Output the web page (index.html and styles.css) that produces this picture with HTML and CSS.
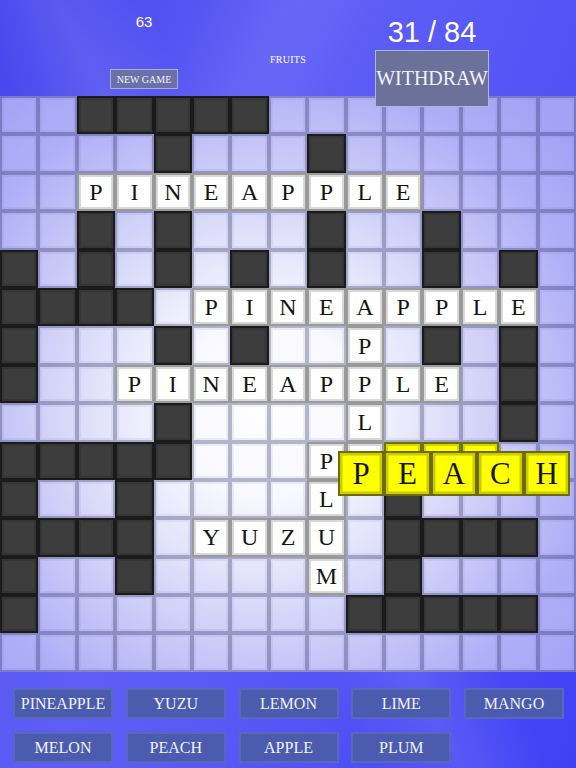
FILE: index.html
```html
<!DOCTYPE html>
<html>
<head>
<meta charset="utf-8">
<title>Fruits</title>
<link rel="stylesheet" href="styles.css">
</head>
<body>
<header class="top">
  <div class="side">
    <div class="score">63</div>
    <div class="btn newgame">NEW GAME</div>
  </div>
  <div class="mid"><span class="category">FRUITS</span></div>
  <div class="side">
    <div class="progress">31 / 84</div>
    <div class="btn withdraw">WITHDRAW</div>
  </div>
</header>

<main class="board">
  <!-- row 0 -->
  <span class="sq"></span><span class="sq"></span><span class="sq blk"></span><span class="sq blk"></span><span class="sq blk"></span><span class="sq blk"></span><span class="sq blk"></span><span class="sq"></span><span class="sq"></span><span class="sq"></span><span class="sq"></span><span class="sq"></span><span class="sq"></span><span class="sq"></span><span class="sq"></span>
  <!-- row 1 -->
  <span class="sq"></span><span class="sq"></span><span class="sq"></span><span class="sq"></span><span class="sq blk"></span><span class="sq"></span><span class="sq"></span><span class="sq"></span><span class="sq blk"></span><span class="sq"></span><span class="sq"></span><span class="sq"></span><span class="sq"></span><span class="sq"></span><span class="sq"></span>
  <!-- row 2 -->
  <span class="sq"></span><span class="sq"></span><span class="sq ltr">P</span><span class="sq ltr">I</span><span class="sq ltr">N</span><span class="sq ltr">E</span><span class="sq ltr">A</span><span class="sq ltr">P</span><span class="sq ltr">P</span><span class="sq ltr">L</span><span class="sq ltr">E</span><span class="sq"></span><span class="sq"></span><span class="sq"></span><span class="sq"></span>
  <!-- row 3 -->
  <span class="sq"></span><span class="sq"></span><span class="sq blk"></span><span class="sq"></span><span class="sq blk"></span><span class="sq"></span><span class="sq"></span><span class="sq"></span><span class="sq blk"></span><span class="sq"></span><span class="sq"></span><span class="sq blk"></span><span class="sq"></span><span class="sq"></span><span class="sq"></span>
  <!-- row 4 -->
  <span class="sq blk"></span><span class="sq"></span><span class="sq blk"></span><span class="sq"></span><span class="sq blk"></span><span class="sq"></span><span class="sq blk"></span><span class="sq"></span><span class="sq blk"></span><span class="sq"></span><span class="sq"></span><span class="sq blk"></span><span class="sq"></span><span class="sq blk"></span><span class="sq"></span>
  <!-- row 5 -->
  <span class="sq blk"></span><span class="sq blk"></span><span class="sq blk"></span><span class="sq blk"></span><span class="sq"></span><span class="sq ltr">P</span><span class="sq ltr">I</span><span class="sq ltr">N</span><span class="sq ltr">E</span><span class="sq ltr">A</span><span class="sq ltr">P</span><span class="sq ltr">P</span><span class="sq ltr">L</span><span class="sq ltr">E</span><span class="sq"></span>
  <!-- row 6 -->
  <span class="sq blk"></span><span class="sq"></span><span class="sq"></span><span class="sq"></span><span class="sq blk"></span><span class="sq"></span><span class="sq blk"></span><span class="sq"></span><span class="sq"></span><span class="sq ltr">P</span><span class="sq"></span><span class="sq blk"></span><span class="sq"></span><span class="sq blk"></span><span class="sq"></span>
  <!-- row 7 -->
  <span class="sq blk"></span><span class="sq"></span><span class="sq"></span><span class="sq ltr">P</span><span class="sq ltr">I</span><span class="sq ltr">N</span><span class="sq ltr">E</span><span class="sq ltr">A</span><span class="sq ltr">P</span><span class="sq ltr">P</span><span class="sq ltr">L</span><span class="sq ltr">E</span><span class="sq"></span><span class="sq blk"></span><span class="sq"></span>
  <!-- row 8 -->
  <span class="sq"></span><span class="sq"></span><span class="sq"></span><span class="sq"></span><span class="sq blk"></span><span class="sq"></span><span class="sq"></span><span class="sq"></span><span class="sq"></span><span class="sq ltr">L</span><span class="sq"></span><span class="sq"></span><span class="sq"></span><span class="sq blk"></span><span class="sq"></span>
  <!-- row 9 -->
  <span class="sq blk"></span><span class="sq blk"></span><span class="sq blk"></span><span class="sq blk"></span><span class="sq blk"></span><span class="sq"></span><span class="sq"></span><span class="sq"></span><span class="sq ltr">P</span><span class="sq ltr"></span><span class="sq hl"></span><span class="sq hl"></span><span class="sq hl"></span><span class="sq"></span><span class="sq"></span>
  <!-- row 10 -->
  <span class="sq blk"></span><span class="sq"></span><span class="sq"></span><span class="sq blk"></span><span class="sq"></span><span class="sq"></span><span class="sq"></span><span class="sq"></span><span class="sq ltr">L</span><span class="sq"></span><span class="sq blk"></span><span class="sq"></span><span class="sq"></span><span class="sq"></span><span class="sq"></span>
  <!-- row 11 -->
  <span class="sq blk"></span><span class="sq blk"></span><span class="sq blk"></span><span class="sq blk"></span><span class="sq"></span><span class="sq ltr">Y</span><span class="sq ltr">U</span><span class="sq ltr">Z</span><span class="sq ltr">U</span><span class="sq"></span><span class="sq blk"></span><span class="sq blk"></span><span class="sq blk"></span><span class="sq blk"></span><span class="sq"></span>
  <!-- row 12 -->
  <span class="sq blk"></span><span class="sq"></span><span class="sq"></span><span class="sq blk"></span><span class="sq"></span><span class="sq"></span><span class="sq"></span><span class="sq"></span><span class="sq ltr">M</span><span class="sq"></span><span class="sq blk"></span><span class="sq"></span><span class="sq"></span><span class="sq"></span><span class="sq"></span>
  <!-- row 13 -->
  <span class="sq blk"></span><span class="sq"></span><span class="sq"></span><span class="sq"></span><span class="sq"></span><span class="sq"></span><span class="sq"></span><span class="sq"></span><span class="sq"></span><span class="sq blk"></span><span class="sq blk"></span><span class="sq blk"></span><span class="sq blk"></span><span class="sq blk"></span><span class="sq"></span>
  <!-- row 14 -->
  <span class="sq"></span><span class="sq"></span><span class="sq"></span><span class="sq"></span><span class="sq"></span><span class="sq"></span><span class="sq"></span><span class="sq"></span><span class="sq"></span><span class="sq"></span><span class="sq"></span><span class="sq"></span><span class="sq"></span><span class="sq"></span><span class="sq"></span>

  <div class="drag">
    <span class="tile">P</span><span class="tile">E</span><span class="tile">A</span><span class="tile">C</span><span class="tile">H</span>
  </div>
</main>

<footer class="words">
  <div class="word">PINEAPPLE</div>
  <div class="word">YUZU</div>
  <div class="word">LEMON</div>
  <div class="word">LIME</div>
  <div class="word">MANGO</div>
  <div class="word">MELON</div>
  <div class="word">PEACH</div>
  <div class="word">APPLE</div>
  <div class="word">PLUM</div>
</footer>
</body>
</html>
```
FILE: styles.css
```css
html, body {
  margin: 0;
  padding: 0;
}

body {
  width: 576px;
  height: 768px;
  overflow: hidden;
  font-family: "Liberation Serif", "DejaVu Serif", serif;
  color: #ffffff;
  background:
    linear-gradient(62deg, rgba(255,255,255,0) 38%, rgba(255,255,255,0.09) 47%, rgba(255,255,255,0) 56%),
    linear-gradient(118deg, rgba(255,255,255,0) 20%, rgba(255,255,255,0.07) 30%, rgba(255,255,255,0) 40%),
    linear-gradient(110deg, #4646ee 0%, #5e5ef6 38%, #5858f6 58%, #4040f6 100%);
}

/* ---------- header ---------- */
.top {
  display: grid;
  grid-template-columns: 1fr 0 1fr;
  height: 96px;
}

.side {
  display: flex;
  flex-direction: column;
  align-items: center;
}

.score {
  font: 15px/16px "Liberation Sans", Arial, sans-serif;
  margin-top: 14px;
}

.mid {
  display: flex;
  justify-content: center;
  padding-top: 54px;
}

.category {
  font-size: 10px;
  line-height: 12px;
  white-space: nowrap;
  letter-spacing: 0.3px;
}

.btn {
  box-sizing: border-box;
  display: flex;
  align-items: center;
  justify-content: center;
  white-space: nowrap;
  color: #f2f2ff;
}

.newgame {
  margin-top: 39px;
  width: 68px;
  height: 20px;
  font-size: 10px;
  background: #6a71a6;
  border: 1px solid #a8aedc;
}

.progress {
  font: 29px/30px "Liberation Sans", Arial, sans-serif;
  margin-top: 17px;
}

.withdraw {
  position: relative;
  z-index: 2;
  margin-top: 3px;
  width: 114px;
  height: 57px;
  font-size: 20px;
  background: #6b7199;
  border: 1.5px solid #b2b6d6;
}

/* ---------- board ---------- */
.board {
  position: relative;
  display: grid;
  grid-template-columns: repeat(15, 1fr);
  grid-template-rows: repeat(15, 38.4px);
  width: 576px;
  height: 576px;
  background:
    radial-gradient(circle at 46% 54%, #ffffff 0px, #f8f8fe 90px, #e2e2fb 170px, #c9c9f8 250px, #b0b0f8 330px, #a2a2f6 410px);
}

.sq {
  box-sizing: border-box;
  border: 2px solid rgba(30, 30, 90, 0.32);
  box-shadow: inset 0 0 0 2px rgba(110, 110, 160, 0.10);
  display: flex;
  align-items: center;
  justify-content: center;
}

.blk {
  background: #3d3d3d;
  border-color: #1b1b1b;
  box-shadow: inset 0 0 0 2px #353535;
}

.ltr {
  background: #ffffff;
  border-color: #9a9a9a;
  box-shadow: inset 0 0 0 2px #d8d8d8;
  color: #141414;
  font-size: 24px;
  line-height: 1;
}

.hl {
  background: #ffff00;
  border-color: #717100;
  box-shadow: inset 0 0 0 2px #d2d200;
}

.drag {
  position: absolute;
  left: 338px;
  top: 355px;
  display: flex;
}

.tile {
  box-sizing: border-box;
  width: 46.4px;
  height: 45px;
  display: flex;
  align-items: center;
  justify-content: center;
  background: #ffff00;
  border: 2px solid #6c6c00;
  box-shadow: inset 0 0 0 2.5px #cccc00;
  color: #141414;
  font-size: 31px;
  line-height: 1;
}

/* ---------- word list ---------- */
.words {
  display: grid;
  grid-template-columns: repeat(5, 100px);
  grid-auto-rows: 31px;
  column-gap: 12.75px;
  row-gap: 13px;
  padding: 16px 13px 0;
}

.word {
  box-sizing: border-box;
  display: flex;
  align-items: center;
  justify-content: center;
  background: #4b5cae;
  border: 2px solid #5869bc;
  color: #f2f2ff;
  font-size: 16px;
}
```
